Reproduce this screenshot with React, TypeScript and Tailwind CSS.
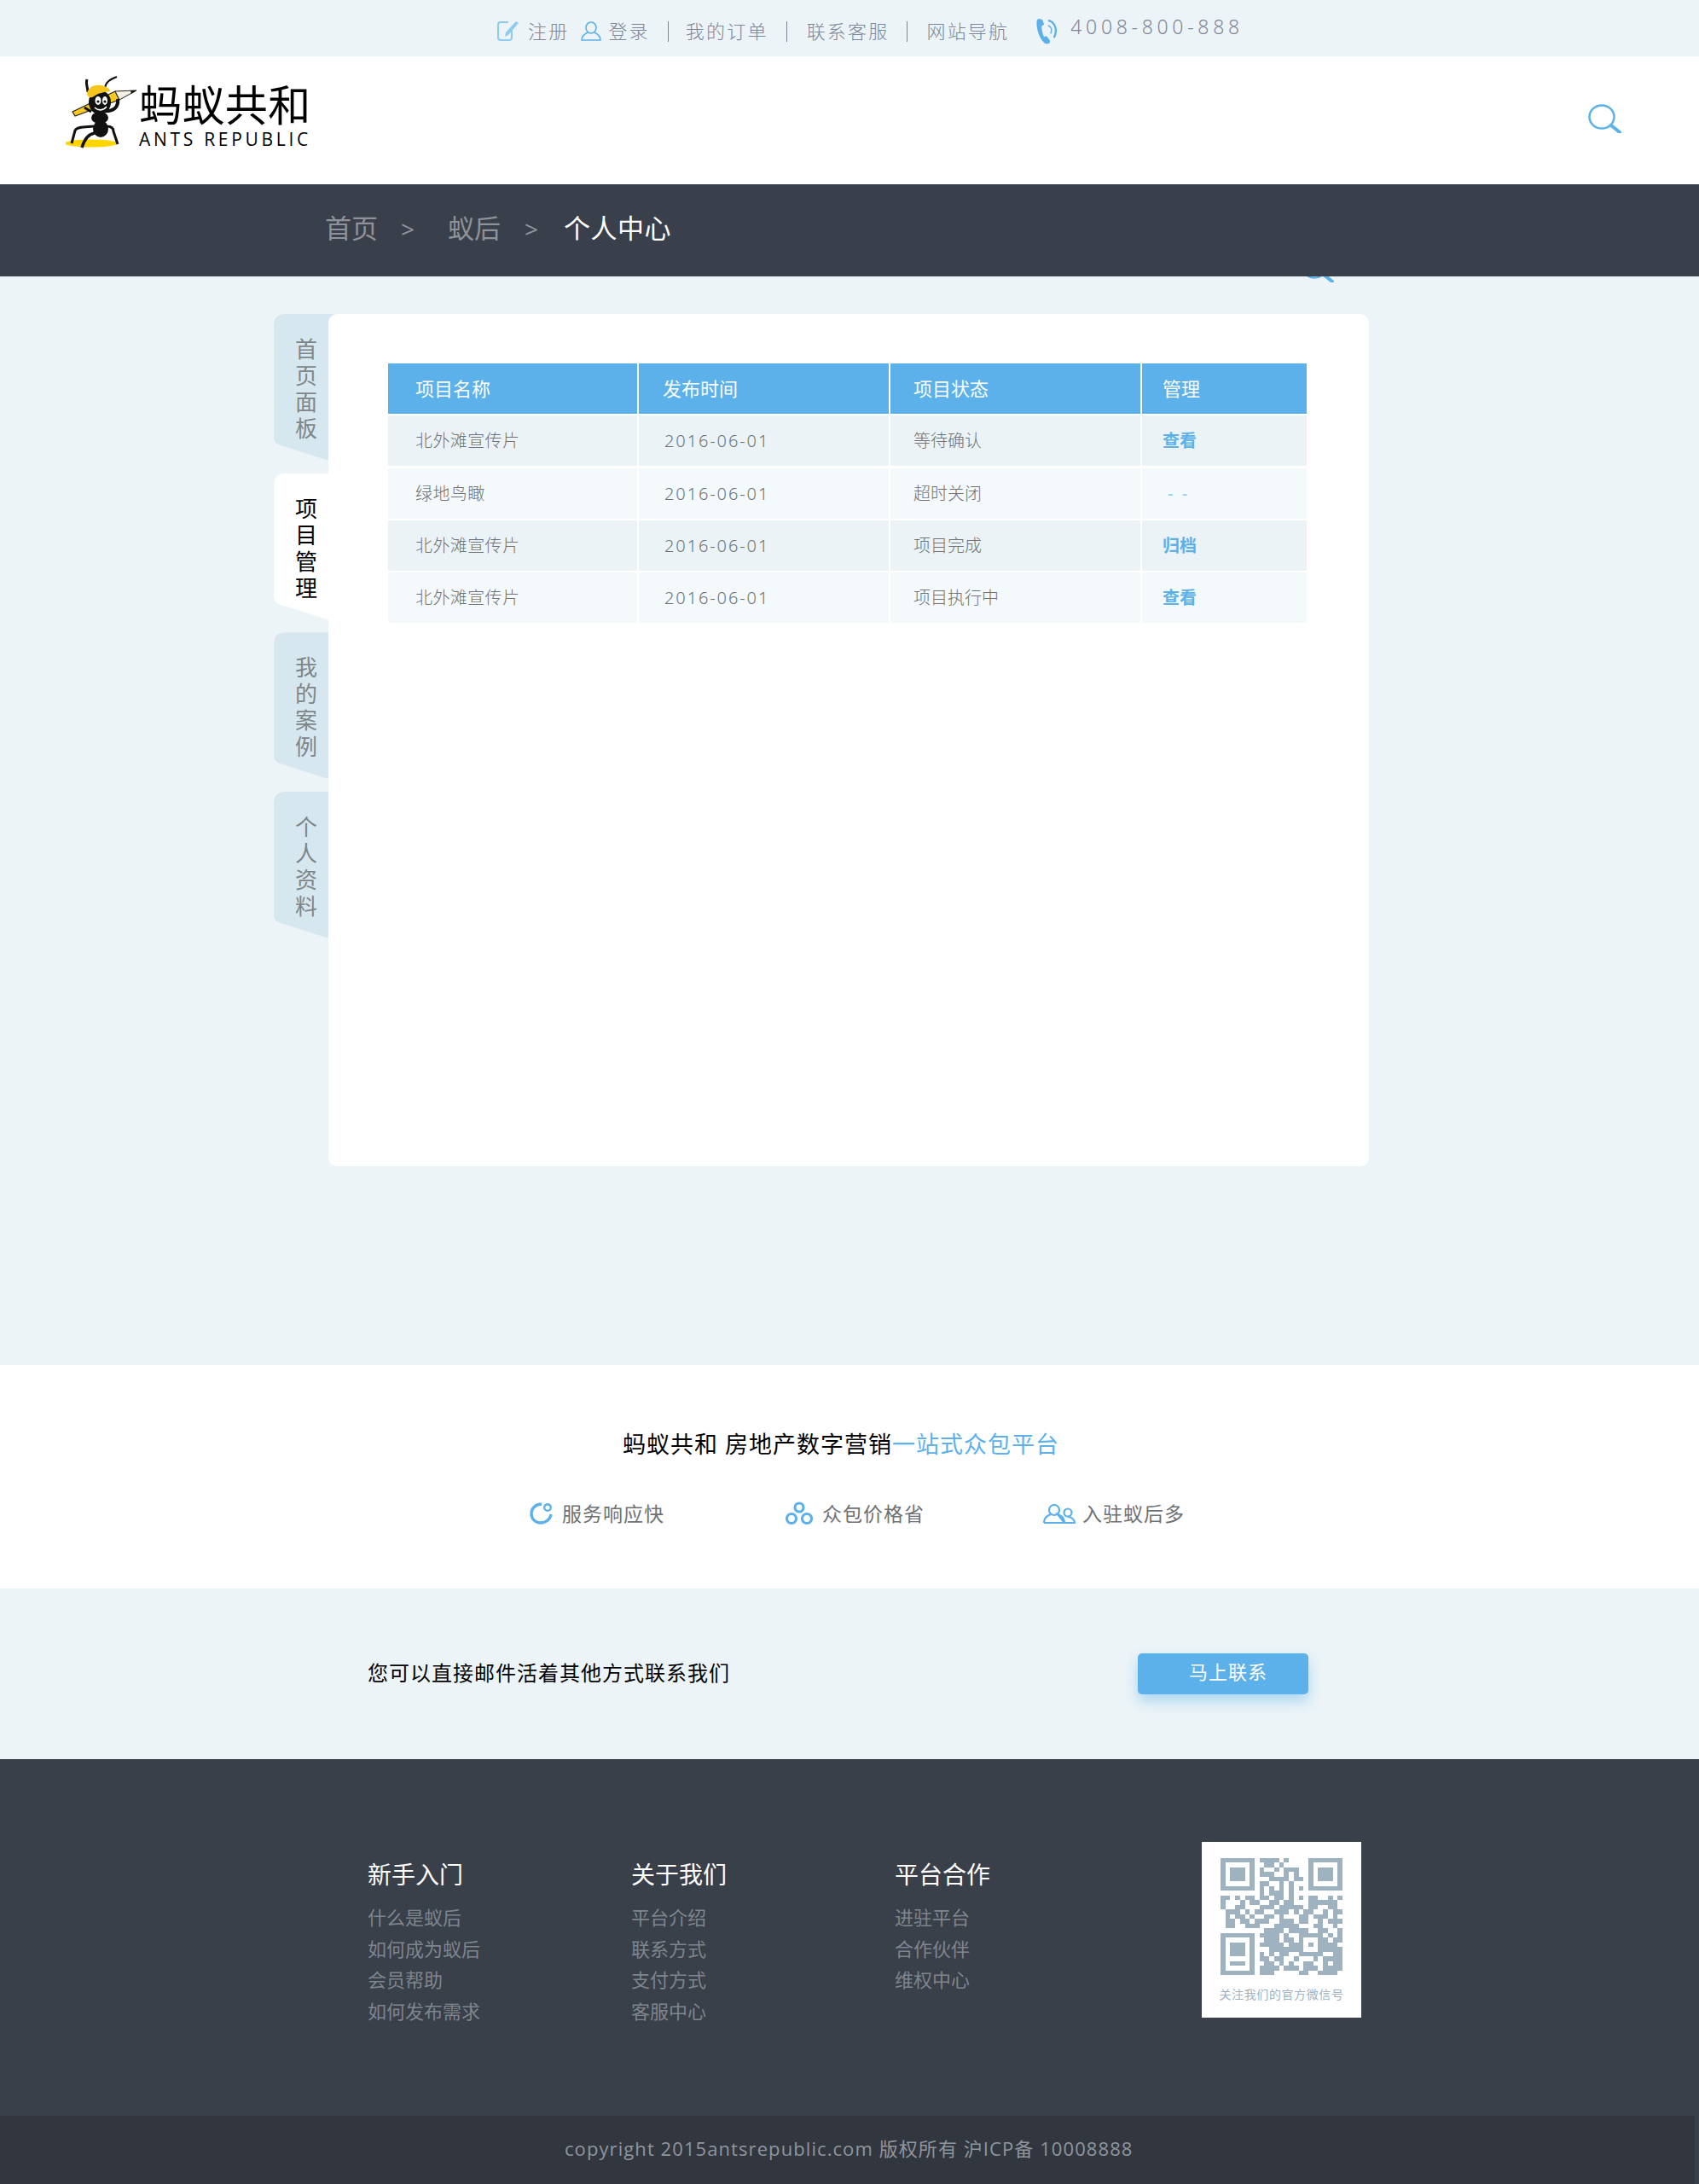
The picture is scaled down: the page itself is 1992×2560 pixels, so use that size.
const qrRows = [
  "1111111011110100001111111",
  "1000001001101000001000001",
  "1011101010010111001011101",
  "1011101011100101001011101",
  "1011101000111101101011101",
  "1000001011001010001000001",
  "1111111010101010101111111",
  "0000000010111010000000000",
  "1101011011011010101100101",
  "1000101100110110001111110",
  "1001100011101111101100110",
  "0111010110011101011001011",
  "0101101001101000110111010",
  "0110110111001110110010111",
  "0110011100011111000110010",
  "0000000001111011110011001",
  "1111111011110100111110101",
  "1000001001110110100011011",
  "1011101011111011101011110",
  "1011101000111111100011111",
  "1011101010101100111110011",
  "1000001011011001000101111",
  "1011101001101010011001011",
  "1000001011110111011101111",
  "1111111011100000110011110",
];

const tabs = ["首页面板", "项目管理", "我的案例", "个人资料"];

const rows = [
  { name: "北外滩宣传片", status: "等待确认", action: "查看" },
  { name: "绿地鸟瞰", status: "超时关闭", action: "- -" },
  { name: "北外滩宣传片", status: "项目完成", action: "归档" },
  { name: "北外滩宣传片", status: "项目执行中", action: "查看" },
];

const footerCols = [
  { title: "新手入门", links: ["什么是蚁后", "如何成为蚁后", "会员帮助", "如何发布需求"], width: "w-[309px]" },
  { title: "关于我们", links: ["平台介绍", "联系方式", "支付方式", "客服中心"], width: "w-[309px]" },
  { title: "平台合作", links: ["进驻平台", "合作伙伴", "维权中心"], width: "w-[360px]" },
];

const SearchIcon = ({ className }: { className?: string }) => (
  <svg viewBox="0 0 39 34" className={className} fill="none" stroke="#5cb1ea">
    <ellipse cx="16" cy="15" rx="14.5" ry="13.5" strokeWidth="2.5" />
    <path d="M27 25 L37 33" strokeWidth="4" strokeLinecap="round" />
  </svg>
);

const AntLogo = () => (
  <svg viewBox="0 0 84 86" className="w-[84px] h-[86px] shrink-0">
    <ellipse cx="30" cy="80" rx="31" ry="4.5" fill="#ffd500" />
    {/* pencil */}
    <path d="M8 43 L58 19 L63 29 L11 48 Z" fill="#f7c91e" stroke="#222" strokeWidth="1.2" />
    <path d="M58 19 L83 18 L63 29 Z" fill="#f4f0e4" stroke="#222" strokeWidth="1" />
    <path d="M76 18 L83 18 L77 22 Z" fill="#111" />
    {/* antennae */}
    <path d="M25 5 C23 10 26 14 26 20" stroke="#111" strokeWidth="3" fill="none" />
    <path d="M60 2 C52 5 47 8 46 15" stroke="#111" strokeWidth="2" fill="none" />
    {/* arm and body */}
    <path d="M61 28 C62 36 58 44 42 42" stroke="#111" strokeWidth="4" fill="none" />
    <ellipse cx="40" cy="50" rx="10" ry="7" fill="#111" />
    <path d="M30 43 L22 38" stroke="#111" strokeWidth="3" />
    <ellipse cx="41" cy="63" rx="9" ry="10" fill="#111" />
    {/* head */}
    <ellipse cx="40" cy="32" rx="13" ry="14" fill="#111" />
    <path d="M25 22 C26 14 34 11 41 12 C47 13 51 15 52 19 C45 20 38 21 33 25 C30 27 26 27 25 22 Z" fill="#f5c51c" />
    <ellipse cx="38" cy="30" rx="3.5" ry="5" fill="#fff" />
    <ellipse cx="46" cy="30" rx="3" ry="5" fill="#fff" />
    <circle cx="38" cy="31" r="1.6" fill="#111" />
    <circle cx="46" cy="31" r="1.6" fill="#111" />
    <path d="M34 38 C38 42 44 42 48 37" stroke="#fff" strokeWidth="1.6" fill="none" />
    {/* legs */}
    <path d="M33 60 C24 61 13 60 11 65 L7 80" stroke="#111" strokeWidth="3" fill="none" />
    <path d="M34 68 C27 69 22 75 19 85" stroke="#111" strokeWidth="3.4" fill="none" />
    <path d="M48 60 C54 60 56 63 56 66 L61 81" stroke="#111" strokeWidth="3" fill="none" />
  </svg>
);

const EditIcon = () => (
  <svg viewBox="0 0 26 24" className="w-[26px] h-[24px] shrink-0" fill="none" stroke="#8ecbf0" strokeWidth="2">
    <path d="M13 2 H4 Q1 2 1 5 V20 Q1 23 4 23 H14 Q17 23 17 20 V12" />
    <path d="M22 1 L25 3 L13 17 L9 19 L10 14 Z" fill="#8ecbf0" stroke="none" />
  </svg>
);

const UserIcon = () => (
  <svg viewBox="0 0 24 23" className="w-[24px] h-[23px] shrink-0" fill="none" stroke="#5cb1ea" strokeWidth="1.6">
    <ellipse cx="12" cy="7.5" rx="6" ry="6.5" />
    <path d="M8 13 C4 15 1 18 1 22 H23 C23 18 20 15 16 13" />
  </svg>
);

const PhoneIcon = () => (
  <svg viewBox="0 0 26 32" className="w-[26px] h-[31px] shrink-0" fill="#5cb1ea">
    <path d="M3 1 C1 1 0 3 0 6 C0 14 3 24 9 30 C11 32 14 32 16 30 L16 27 L12 22 L9 23 C7 19 6 14 6 10 L9 8 L7 2 Z" />
    <path d="M14 3 C22 5 26 14 21 24" stroke="#5cb1ea" strokeWidth="2.4" fill="none" />
    <path d="M14 9 C18 11 19 15 17 19" stroke="#5cb1ea" strokeWidth="1.6" fill="none" />
  </svg>
);

const ServiceIcon = () => (
  <svg viewBox="0 0 27 26" className="w-[27px] h-[26px] shrink-0" fill="none" stroke="#5cb1ea" strokeWidth="3.4">
    <path d="M14 2 C7 2 2 7 2 13 C2 20 7 24 13 24 C19 24 24 20 25 14" />
    <circle cx="21" cy="6" r="3.8" strokeWidth="2.4" />
  </svg>
);

const GroupIcon = () => (
  <svg viewBox="0 0 32 28" className="w-[32px] h-[28px] shrink-0" fill="none" stroke="#5cb1ea" strokeWidth="3.2">
    <circle cx="16" cy="7" r="5" />
    <circle cx="7" cy="20" r="5.5" />
    <circle cx="25" cy="20" r="5.5" />
  </svg>
);

const UsersIcon = () => (
  <svg viewBox="0 0 38 23" className="w-[38px] h-[23px] shrink-0" fill="none" stroke="#5cb1ea" strokeWidth="2.2">
    <ellipse cx="13" cy="7" rx="6" ry="6" />
    <path d="M1 22 C1 16 6 13 9 12 M17 12 C20 13 25 16 25 22 Z M1 22 H25" />
    <ellipse cx="29" cy="10" rx="4.5" ry="4.5" />
    <path d="M29 15 C33 15 37 18 37 22 H26" />
  </svg>
);

const Sep = ({ className }: { className: string }) => (
  <span className={`w-px h-[24px] bg-[#7f8699] shrink-0 mt-[8px] ${className}`} />
);

function App() {
  return (
    <div className="w-[1992px] font-['Noto_Sans','Noto_Sans_CJK_SC',sans-serif]">
      {/* top bar */}
      <div className="h-[66px] bg-[#ecf4f7] flex items-center pl-[583px] text-[22px] tracking-[2.2px] text-[#7f8699] font-light">
        <span className="mt-[6px]"><EditIcon /></span>
        <span className="ml-[10px] mt-[6px]">注册</span>
        <span className="ml-[14px] mt-[6px]"><UserIcon /></span>
        <span className="ml-[8px] mt-[6px]">登录</span>
        <Sep className="ml-[21px]" />
        <span className="ml-[20px] mt-[6px]">我的订单</span>
        <Sep className="ml-[21px]" />
        <span className="ml-[23px] mt-[6px]">联系客服</span>
        <Sep className="ml-[21px]" />
        <span className="ml-[22px] mt-[6px]">网站导航</span>
        <span className="ml-[32px] mt-[6px]"><PhoneIcon /></span>
        <span className="ml-[14px] -mt-[3px] text-[23px] tracking-[4.7px]">4008-800-888</span>
      </div>

      {/* logo row */}
      <div className="h-[150px] bg-white flex items-start justify-between pl-[77px] pr-[91px] pt-[22px]">
        <div className="flex items-start">
          <AntLogo />
          <div className="ml-[2px] mt-[10px] text-black">
            <div className="text-[50px] leading-[50px] tracking-[0.4px] whitespace-nowrap">蚂蚁共和</div>
            <div className="mt-[5px] text-[21px] leading-[20px] tracking-[3.7px] font-medium font-['Open_Sans',sans-serif] whitespace-nowrap">ANTS REPUBLIC</div>
          </div>
        </div>
        <SearchIcon className="w-[39px] h-[34px] mt-[34px]" />
      </div>

      {/* breadcrumb */}
      <div className="relative h-[108px] bg-[#3a404b] flex items-center pl-[381px] pb-[5px] text-[31px] text-[#8f9299]">
        <span>首页</span>
        <span className="ml-[27px] text-[28px]">&gt;</span>
        <span className="ml-[39px]">蚁后</span>
        <span className="ml-[28px] text-[28px]">&gt;</span>
        <span className="ml-[30px] text-white tracking-[0.5px]">个人中心</span>
      </div>

      {/* main */}
      <div className="relative h-[1276px] bg-[#ecf4f7] pt-[44px] pl-[321px] flex items-start overflow-hidden">
        <SearchIcon className="absolute left-[1525px] top-[-27px] w-[39px] h-[34px]" />
        <div className="w-[74px] flex flex-col gap-[11.67px] shrink-0">
          {tabs.map((tab, i) => (
            <div
              key={tab}
              className={`h-[175px] w-[74px] pl-[25px] pt-[26px] text-[26px] leading-[31px] [clip-path:path('M14_0H74V175L8_154Q0_152_0_144V14Q0_0_14_0Z')] ${
                i === 1 ? "bg-white text-black" : "bg-[#d7e7ef] text-[#7e8689]"
              }`}
            >
              <div className="w-[26px]">{tab}</div>
            </div>
          ))}
        </div>
        <div className="relative -ml-[10px] w-[1220px] h-[999px] rounded-[10px] bg-white pt-[58px] pl-[70px]">
          <div className="w-[1077px] flex flex-col gap-[2.33px]">
            <div className="grid grid-cols-[294px_295px_295px_193px] h-[59px] bg-[#5cb1ea] text-white text-[22px] items-stretch">
              <div className="pl-[32px] pb-[1px] flex items-center border-r-2 border-white">项目名称</div>
              <div className="pl-[28px] pb-[1px] flex items-center border-r-2 border-white">发布时间</div>
              <div className="pl-[27px] pb-[1px] flex items-center border-r-2 border-white">项目状态</div>
              <div className="pl-[24px] pb-[1px] flex items-center">管理</div>
            </div>
            {rows.map((row, i) => (
              <div
                key={i}
                className={`grid grid-cols-[294px_295px_295px_193px] h-[59px] text-[20px] text-[#6f7377] font-light ${
                  i % 2 === 0 ? "bg-[#ebf3f7]" : "bg-[#f4f9fc]"
                }`}
              >
                <div className="pl-[32px] pt-[1px] flex items-center border-r-2 border-white tracking-[0.4px]">{row.name}</div>
                <div className="pl-[30px] pt-[1px] flex items-center border-r-2 border-white tracking-[1.9px]">2016-06-01</div>
                <div className="pl-[27px] pt-[1px] flex items-center border-r-2 border-white">{row.status}</div>
                {row.action === "- -" ? (
                  <div className="pl-[30px] pt-[1px] flex items-center text-[#8ecbf0] font-normal whitespace-pre">-  -</div>
                ) : (
                  <div className="pl-[24px] pt-[1px] flex items-center text-[#5cb1ea] font-bold">{row.action}</div>
                )}
              </div>
            ))}
          </div>
        </div>
      </div>

      {/* slogan */}
      <div className="h-[262px] bg-white pt-[75px]">
        <div className="pl-[730px] text-[27px] leading-[36px] tracking-[1px] text-black">
          蚂蚁共和 房地产数字营销<span className="text-[#5cb1ea]">一站式众包平台</span>
        </div>
        <div className="flex items-center mt-[46px] pl-[621px] text-[23px] leading-[34px] tracking-[1px] text-[#6e7174]">
          <ServiceIcon />
          <span className="ml-[11px]">服务响应快</span>
          <span className="ml-[142px]"><GroupIcon /></span>
          <span className="ml-[11px]">众包价格省</span>
          <span className="ml-[139px]"><UsersIcon /></span>
          <span className="ml-[8px]">入驻蚁后多</span>
        </div>
      </div>

      {/* contact */}
      <div className="h-[200px] bg-[#ecf4f7] flex items-start pl-[431px] pt-[76px]">
        <div className="text-[24px] leading-[46px] tracking-[1px] text-black w-[903px]">您可以直接邮件活着其他方式联系我们</div>
        <div className="w-[200px] h-[48px] rounded-[5px] bg-[#5cb1ea] shadow-[0_8px_16px_rgba(92,177,234,0.45)] pl-[60px] text-white text-[22px] leading-[42px] tracking-[1px]">马上联系</div>
      </div>

      {/* footer */}
      <div className="bg-[#39404a]">
        <div className="h-[418px] flex items-start pl-[431px] pt-[97px]">
          {footerCols.map((col) => (
            <div key={col.title} className={`${col.width} pt-[22px]`}>
              <div className="text-[28px] leading-[32px] text-white">{col.title}</div>
              <div className="mt-[16px] text-[22px] leading-[36.5px] text-[#7f858e]">
                {col.links.map((link) => (
                  <div key={link}>{link}</div>
                ))}
              </div>
            </div>
          ))}
          <div className="w-[187px] h-[206px] bg-white pt-[19px] flex flex-col items-center">
            <svg viewBox="0 0 25 25" preserveAspectRatio="none" className="w-[143px] h-[137px]" fill="#9fb2c0" shapeRendering="crispEdges">
              {qrRows.map((row, y) =>
                row.split("").map((cell, x) => (cell === "1" ? <rect key={`${x}-${y}`} x={x} y={y} width="1" height="1" /> : null))
              )}
            </svg>
            <div className="mt-[13px] text-[14px] leading-[20px] tracking-[0.6px] text-[#a0b2bf] whitespace-nowrap">关注我们的官方微信号</div>
          </div>
        </div>

        {/* copyright */}
        <div className="w-[1987px] h-[80px] bg-[#32373f] flex items-center pl-[662px] pb-[3px] text-[22px] tracking-[1.08px] text-[#8f959e] font-['Open_Sans','Noto_Sans_CJK_SC',sans-serif]">
          copyright 2015antsrepublic.com 版权所有 沪ICP备 10008888
        </div>
      </div>
    </div>
  );
}

export default App;
